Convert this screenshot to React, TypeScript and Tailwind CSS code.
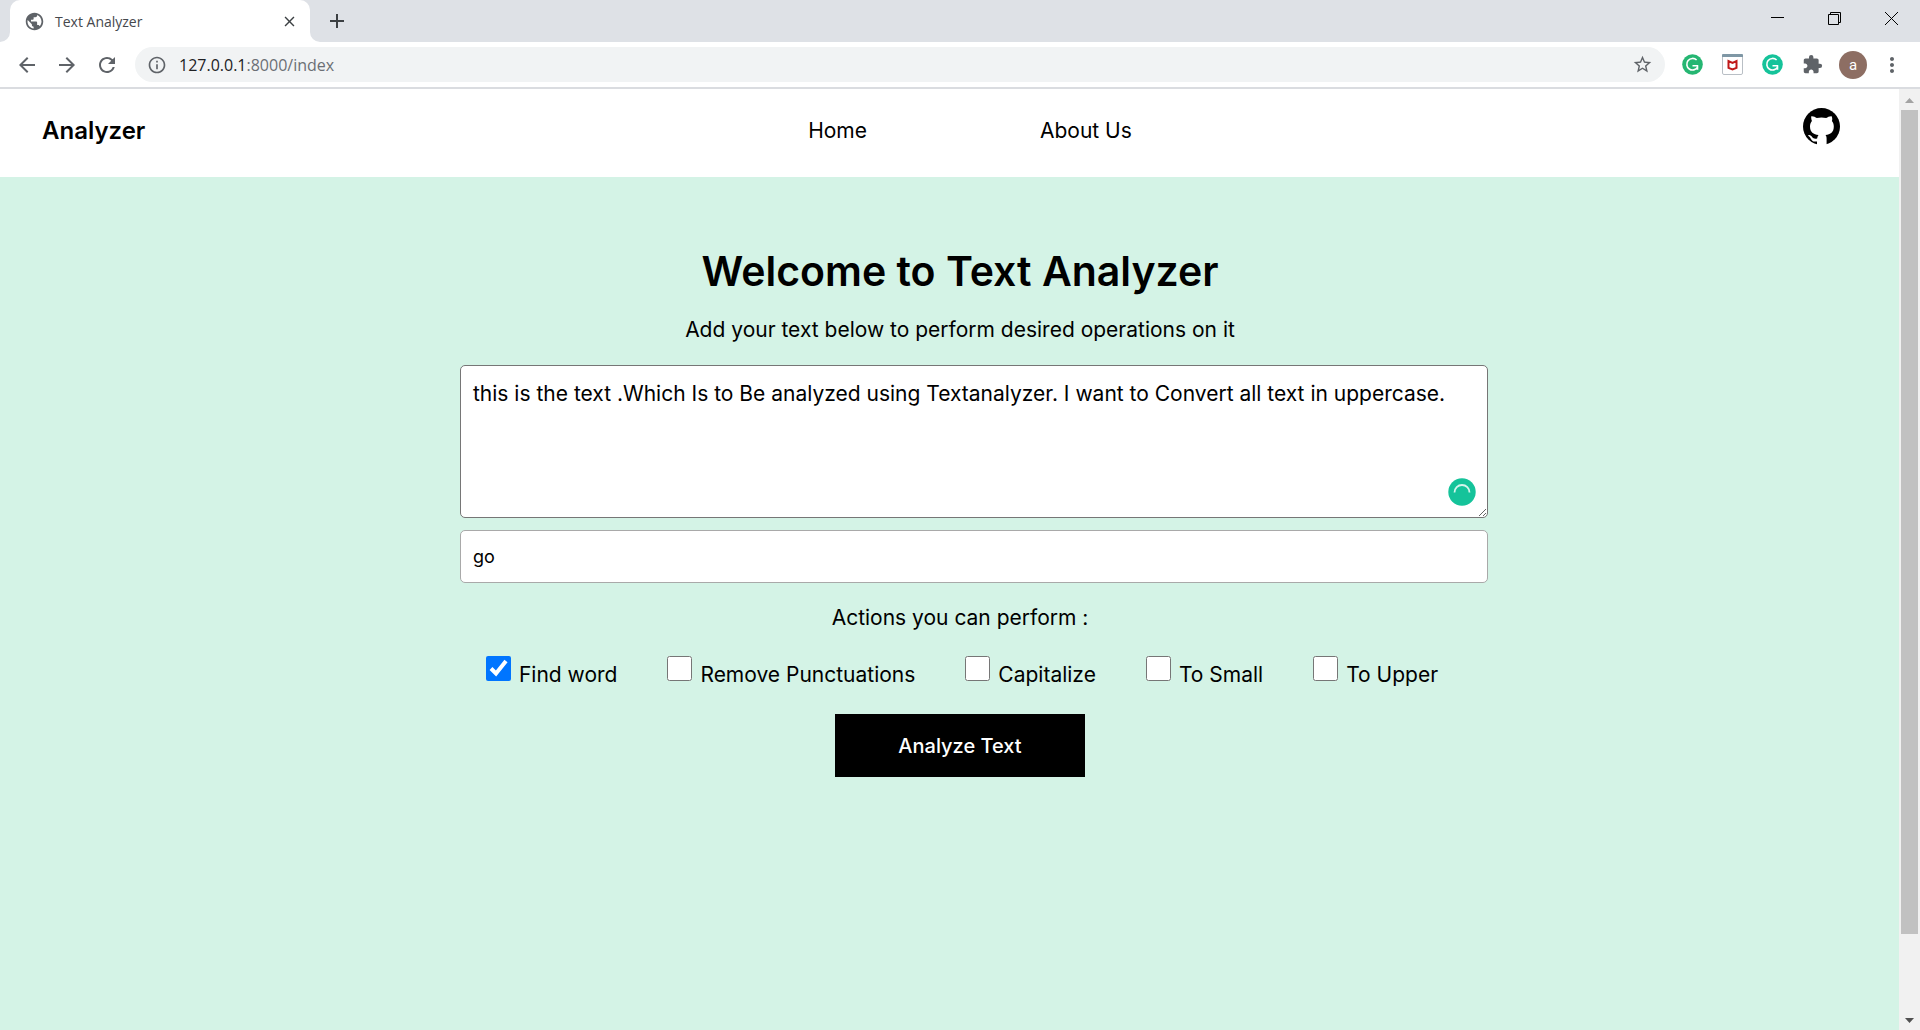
import { useState, type ReactNode } from 'react'
import { MdPublic, MdClose, MdAdd, MdArrowBack, MdArrowForward, MdRefresh, MdInfoOutline, MdStarBorder, MdExtension, MdMoreVert } from 'react-icons/md'

function IconButton({ label, className = '', children }: { label: string; className?: string; children: ReactNode }) {
  return (
    <button type="button" aria-label={label} className={`flex shrink-0 items-center justify-center ${className}`}>
      {children}
    </button>
  )
}

function TabStrip() {
  return (
    <div className="flex h-[42px] items-stretch bg-[#dee1e6] pl-[10px]">
      <div className="relative flex w-[300px] items-center rounded-t-[10px] bg-white pr-3 pl-[14px] text-[#45484d]">
        <svg className="absolute bottom-0 -left-[10px] size-[10px] fill-white" viewBox="0 0 10 10"><path d="M10 0v10H0A10 10 0 0 0 10 0Z" /></svg>
        <svg className="absolute -right-[10px] bottom-0 size-[10px] fill-white" viewBox="0 0 10 10"><path d="M0 0v10h10A10 10 0 0 1 0 0Z" /></svg>
        <MdPublic className="mr-[10px] size-[21px] text-[#5f6368]" />
        <span className="flex-1 font-['Open_Sans',sans-serif] text-[14px]">Text Analyzer</span>
        <IconButton label="Close tab"><MdClose className="size-[17px] text-[#3c4043]" /></IconButton>
      </div>
      <IconButton label="New tab" className="ml-[15px]"><MdAdd className="size-[24px] text-[#3c4043]" /></IconButton>
      <div className="ml-auto flex items-center gap-11 pr-[22px] pb-[6px] text-black">
        <IconButton label="Minimize">
          <svg className="size-[13px]" viewBox="0 0 13 13"><path d="M0 5.500h13" stroke="currentColor" /></svg>
        </IconButton>
        <IconButton label="Restore">
          <svg className="size-[13px]" viewBox="0 0 13 13" fill="none" stroke="currentColor"><path d="M.5 2.500h10v10H.5zM2.500 2.500v-2h10v10h-2" /></svg>
        </IconButton>
        <IconButton label="Close">
          <svg className="size-[13px]" viewBox="0 0 13 13"><path d="m0 0 13 13M13 0 0 13" stroke="currentColor" /></svg>
        </IconButton>
      </div>
    </div>
  )
}

function Grammarly({ className }: { className: string }) {
  return (
    <svg className={`size-[21px] ${className}`} viewBox="0 0 21 21">
      <circle cx="10.500" cy="10.500" r="10.300" fill="currentColor" />
      <path d="M14.600 6A5.800 5.800 0 1 0 15.600 13.200M10.500 11.800h5.700M15.500 11.500v4.200" fill="none" stroke="white" strokeWidth="1.600" />
    </svg>
  )
}

function GithubMark() {
  return (
    <svg className="mb-[10px] size-[37px]" viewBox="0 0 37 37">
      <circle cx="18.500" cy="18.500" r="18.500" />
      <path
        fill="#fff"
        d="M8.300 8.200c1.900-.3 4 .8 5.500 1.800 3-.7 6.400-.7 9.400 0 1.500-1 3.600-2.100 5.500-1.800.7 1.700.7 3.400.2 4.900 1.300 1.500 1.900 3.300 1.900 5.500 0 5.700-3.300 7.800-8.300 8.500.8.900 1.100 2 1.100 3.600V38H14v-4.600c-3.800.7-5.300-.8-6.200-2.700-.7-1.500-1.400-2-2.300-2.600-.8-.6-.4-1.200.6-1.100 1.500.1 2.300 1.100 3 2.100 1.200 1.700 2.900 2.100 5 1.400.2-1.400.7-2.600 1.400-3.400-5-.7-8.500-2.800-8.500-8.500 0-2.200.7-4 1.900-5.500-.6-1.500-.9-3.200-.6-4.900Z"
      />
    </svg>
  )
}

function Toolbar() {
  return (
    <div className="flex h-[47px] items-center border-b-2 border-[#dadce0] bg-white pr-4 pl-[15px] text-[#5f6368]">
      <IconButton label="Back"><MdArrowBack className="size-[24px]" /></IconButton>
      <IconButton label="Forward" className="ml-4"><MdArrowForward className="size-[24px]" /></IconButton>
      <IconButton label="Reload" className="ml-4"><MdRefresh className="size-[24px]" /></IconButton>
      <div className="ml-4 flex h-[35px] flex-1 items-center rounded-full bg-[#f1f3f4] px-3">
        <MdInfoOutline className="size-[20px]" />
        <div className="ml-3 flex-1 font-['Open_Sans',sans-serif] text-[16px] text-[#6b6f74]">
          <span className="text-[#202124]">127.0.0.1</span>:8000/index
        </div>
        <IconButton label="Bookmark this tab"><MdStarBorder className="size-[21px]" /></IconButton>
      </div>
      <div className="ml-[17px] flex items-center gap-[19px]">
        <IconButton label="Grammarly"><Grammarly className="text-[#25b672]" /></IconButton>
        <IconButton label="McAfee">
          <svg className="size-[21px]" viewBox="0 0 21 21">
            <rect x=".5" y=".5" width="20" height="20" rx="1.500" fill="#fff" stroke="#b9bfc5" />
            <path d="M0 3V1q0-1 1-1h19q1 0 1 1v2z" fill="#7f97a5" />
            <path d="M6.500 7v6.800l4 1.700 4-1.700V7l-4 2z" fill="#fff" stroke="#c01818" strokeWidth="2" />
          </svg>
        </IconButton>
        <IconButton label="Grammarly for Chrome"><Grammarly className="text-[#15c39a]" /></IconButton>
        <IconButton label="Extensions"><MdExtension className="size-[21px]" /></IconButton>
      </div>
      <button type="button" aria-label="Profile" className="ml-4 size-[28px] rounded-full bg-[#8d6e63] font-['Roboto',sans-serif] text-[15px] leading-[26px] text-white">a</button>
      <IconButton label="Menu" className="ml-[13px]"><MdMoreVert className="size-[24px]" /></IconButton>
    </div>
  )
}

function Scrollbar() {
  return (
    <div aria-hidden="true" className="flex w-[21px] flex-col items-center bg-[#f1f1f1]">
      <svg className="h-[21px] w-[9px] shrink-0 fill-[#a3a3a3]" viewBox="0 0 9 21"><path d="M0 14h9L4.500 9z" /></svg>
      <div className="w-[17px] flex-[824] bg-[#c1c1c1]" />
      <div className="flex-[75]" />
      <svg className="h-[21px] w-[9px] shrink-0 fill-[#505050]" viewBox="0 0 9 21"><path d="M0 9h9l-4.500 5z" /></svg>
    </div>
  )
}

const actions = ['Find word', 'Remove Punctuations', 'Capitalize', 'To Small', 'To Upper']

function AnalyzerForm() {
  const [checked, setChecked] = useState<string[]>(['Find word'])
  const toggle = (a: string) => setChecked((c) => (c.includes(a) ? c.filter((x) => x !== a) : [...c, a]))
  return (
    <form className="flex w-full max-w-[1028px] flex-col items-center" onSubmit={(e) => e.preventDefault()}>
      <div className="relative w-full">
        <textarea
          aria-label="Text to analyze"
          spellCheck={false}
          className="block h-[153px] w-full resize rounded-[5px] border border-[#767676] bg-white p-3 leading-[32px] outline-none"
          defaultValue="this is the text .Which Is to Be analyzed using Textanalyzer. I want to Convert all text in uppercase."
        />
        <svg className="absolute right-3 bottom-3 size-[28px]" viewBox="0 0 28 28">
          <circle cx="14" cy="14" r="13.700" fill="#15c39a" />
          <path d="M6.500 14.500a7.500 7.500 0 0 1 15 0" fill="none" stroke="#d6f5ed" strokeWidth="1.800" />
        </svg>
      </div>
      <input aria-label="Word to find" className="mt-3 h-[53px] w-full rounded-[5px] border border-[#a9a9a9] bg-white px-3 text-[18px] outline-none" defaultValue="go" />
      <fieldset className="mt-5 w-full">
        <legend className="w-full pr-7 text-center leading-[30px]">Actions you can perform :</legend>
        <div className="mt-[23px] flex flex-wrap justify-center gap-x-[50px] gap-y-4 pr-6">
          {actions.map((a) => (
            <label key={a} className="flex items-start gap-2 whitespace-nowrap">
              <input type="checkbox" className="size-[25px] shrink-0 accent-[#0075ff]" checked={checked.includes(a)} onChange={() => toggle(a)} />
              <span className="pt-1 leading-[30px]">{a}</span>
            </label>
          ))}
        </div>
      </fieldset>
      <div className="w-full pr-7 text-center">
        <button type="submit" className="mt-6 h-[63px] w-[250px] bg-black text-[20px] font-medium text-white">Analyze Text</button>
      </div>
    </form>
  )
}

export default function App() {
  return (
    <div className="flex min-h-screen flex-col bg-white">
      <TabStrip />
      <Toolbar />
      <div className="flex flex-1 font-['Inter',sans-serif] text-[21px] text-black">
        <div className="flex flex-1 flex-col bg-[#d4f3e6]">
          <nav className="grid h-[88px] grid-cols-[1fr_auto_1fr] items-center bg-white pr-[59px] pb-1 pl-[42px]">
            <a href="#" className="text-[24px] font-semibold">Analyzer</a>
            <div className="flex gap-[173px] pl-[58px]">
              <a href="#home">Home</a>
              <a href="#about">About Us</a>
            </div>
            <a href="#github" aria-label="GitHub" className="justify-self-end"><GithubMark /></a>
          </nav>
          <main className="flex flex-col items-center pt-[64px] pl-[49px]">
            <header className="mb-5 pr-7 text-center">
              <h1 className="text-[41px] leading-[60px] font-semibold">Welcome to Text Analyzer</h1>
              <p className="mt-[14px] leading-[30px]">Add your text below to perform desired operations on it</p>
            </header>
            <AnalyzerForm />
          </main>
        </div>
        <Scrollbar />
      </div>
    </div>
  )
}
